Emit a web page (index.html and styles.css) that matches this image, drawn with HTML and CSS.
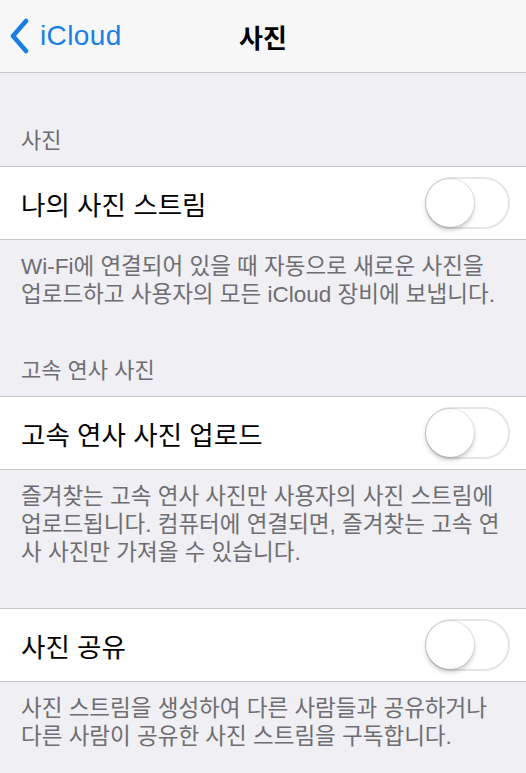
FILE: index.html
```html
<!DOCTYPE html>
<html lang="ko">
<head>
  <meta charset="UTF-8">
  <meta name="viewport" content="width=device-width, initial-scale=1.0">
  <title>사진</title>
  <link rel="stylesheet" href="styles.css">
</head>
<body>
  <div class="navbar">
    <a class="back" href="#">
      <svg class="chevron" viewBox="0 0 20 36" width="20" height="36">
        <path d="M17 3 L4 18 L17 33" fill="none" stroke="currentColor" stroke-width="4.6" stroke-linecap="round" stroke-linejoin="round"/>
      </svg>
      <span>iCloud</span>
    </a>
    <h1>사진</h1>
  </div>

  <div class="group first">
    <div class="group-header">사진</div>
    <div class="cell">
      <span class="cell-label">나의 사진 스트림</span>
      <span class="switch"><span class="knob"></span></span>
    </div>
    <p class="group-footer">Wi-Fi에 연결되어 있을 때 자동으로 새로운 사진을 업로드하고 사용자의 모든 iCloud 장비에 보냅니다.</p>
  </div>

  <div class="group">
    <div class="group-header">고속 연사 사진</div>
    <div class="cell">
      <span class="cell-label">고속 연사 사진 업로드</span>
      <span class="switch"><span class="knob"></span></span>
    </div>
    <p class="group-footer">즐겨찾는 고속 연사 사진만 사용자의 사진 스트림에 업로드됩니다. 컴퓨터에 연결되면, 즐겨찾는 고속 연사 사진만 가져올 수 있습니다.</p>
  </div>

  <div class="group plain">
    <div class="cell">
      <span class="cell-label">사진 공유</span>
      <span class="switch"><span class="knob"></span></span>
    </div>
    <p class="group-footer">사진 스트림을 생성하여 다른 사람들과 공유하거나 다른 사람이 공유한 사진 스트림을 구독합니다.</p>
  </div>
</body>
</html>
```

FILE: styles.css
```css
body {
  margin: 0;
  background-color: #efeff4;
  font-family: "Liberation Sans", "Noto Sans CJK KR", sans-serif;
  color: #000;
  overflow: hidden;
}

.navbar {
  height: 72px;
  background-color: #f7f7f7;
  border-bottom: 1px solid #c8c7cc;
  display: flex;
  align-items: center;
  justify-content: center;
  position: relative;
}

.navbar h1 {
  margin: 0;
  font-size: 26px;
  font-weight: 700;
  font-family: "Noto Sans CJK KR", sans-serif;
}

.back {
  position: absolute;
  left: 9px;
  top: 0;
  bottom: 0;
  display: flex;
  align-items: center;
  gap: 11px;
  color: #1a7fe4;
  text-decoration: none;
  font-size: 28px;
  letter-spacing: 0.4px;
}

.chevron {
  display: block;
}

.group-header {
  padding: 48px 21px 11px;
  font-size: 22px;
  line-height: 28px;
  color: #6d6d72;
}

.group.first .group-header {
  padding-top: 54px;
}

.group.plain {
  margin-top: 41px;
}

.cell {
  height: 72px;
  background-color: #fff;
  border-top: 1px solid #c8c7cc;
  border-bottom: 1px solid #c8c7cc;
  display: flex;
  align-items: center;
  justify-content: space-between;
  padding: 0 16px 0 21px;
}

.cell-label {
  font-size: 26.5px;
}

.switch {
  width: 81px;
  height: 48px;
  border: 2px solid #e5e5e5;
  border-radius: 26px;
  background-color: #fff;
  position: relative;
}

.knob {
  position: absolute;
  left: -1px;
  top: 0;
  width: 48px;
  height: 48px;
  border-radius: 50%;
  background-color: #fff;
  box-shadow: 0 3px 5px rgba(0, 0, 0, 0.22), 0 0 0 1px rgba(0, 0, 0, 0.08);
}

.group-footer {
  margin: 0;
  padding: 13px 24px 0 21px;
  font-size: 22.5px;
  line-height: 28px;
  color: #6d6d72;
}
```
